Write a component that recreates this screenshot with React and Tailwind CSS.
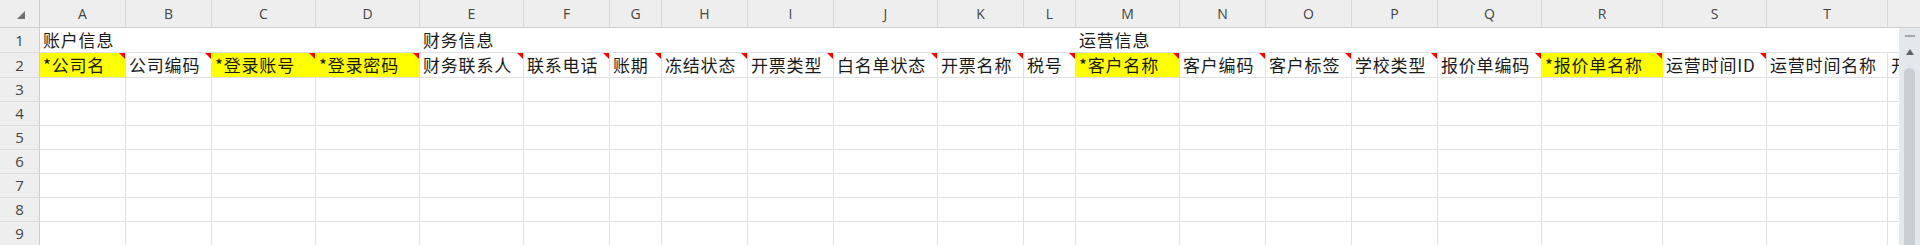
import React from "react";

const W = {
  86: "w-[86px]",
  104: "w-[104px]",
  52: "w-[52px]",
  121: "w-[121px]",
};

const cols = [
  { l: "A", w: 86, t: "*公司名", y: true, c: true },
  { l: "B", w: 86, t: "公司编码", c: true },
  { l: "C", w: 104, t: "*登录账号", y: true, c: true },
  { l: "D", w: 104, t: "*登录密码", y: true, c: true },
  { l: "E", w: 104, t: "财务联系人", c: true },
  { l: "F", w: 86, t: "联系电话", c: true },
  { l: "G", w: 52, t: "账期", c: true },
  { l: "H", w: 86, t: "冻结状态", c: true },
  { l: "I", w: 86, t: "开票类型", c: true },
  { l: "J", w: 104, t: "白名单状态", c: true },
  { l: "K", w: 86, t: "开票名称", c: true },
  { l: "L", w: 52, t: "税号", c: true },
  { l: "M", w: 104, t: "*客户名称", y: true, c: true },
  { l: "N", w: 86, t: "客户编码", c: true },
  { l: "O", w: 86, t: "客户标签", c: true },
  { l: "P", w: 86, t: "学校类型", c: true },
  { l: "Q", w: 104, t: "报价单编码", c: true },
  { l: "R", w: 121, t: "*报价单名称", y: true, c: true },
  { l: "S", w: 104, t: "运营时间ID", c: true },
  { l: "T", w: 121, t: "运营时间名称" },
];

const groups = [
  { t: "账户信息", w: "w-[380px]" },
  { t: "财务信息", w: "w-[656px]" },
  { t: "运营信息", w: "w-[812px]" },
];

const cellFont =
  "font-['Noto_Sans_CJK_SC',sans-serif] text-[17px] tracking-[0.8px] text-[#1b1b1b]";
const hdrFont = "font-['Open_Sans',sans-serif] text-[#444]";

const RowHead = ({ n, h }) => (
  <div
    className={`${h} w-[40px] shrink-0 bg-[#eeeeee] border-r border-b border-r-[#cfcfcf] border-b-[#dcdcdc] flex items-center justify-center text-[15px] ${hdrFont}`}
  >
    {n}
  </div>
);

const Comment = () => (
  <svg className="absolute top-0 right-0" width="6" height="6" viewBox="0 0 6 6">
    <polygon points="0,0 6,0 6,6" fill="#ff0000" />
  </svg>
);

const App = () => {
  const emptyRows = [3, 4, 5, 6, 7, 8, 9];

  return (
    <div className="w-[1920px] h-[245px] overflow-hidden bg-white">
      {/* column headers */}
      <div className="flex h-[28px]">
        <div className="w-[40px] shrink-0 bg-[#eeeeee] border-r border-b border-[#cfcfcf] flex items-center justify-center">
          <svg width="8" height="8" viewBox="0 0 8 8" className="ml-[2px] mt-[2px]">
            <polygon points="8,0 8,8 0,8" fill="#707070" />
          </svg>
        </div>
        {cols.map((c) => (
          <div
            key={c.l}
            className={`${W[c.w]} shrink-0 bg-[#eeeeee] border-r border-b border-r-[#d8d8d8] border-b-[#cfcfcf] flex items-center justify-center text-[14px] ${hdrFont}`}
          >
            {c.l}
          </div>
        ))}
        <div className="flex-1 bg-[#eeeeee] border-b border-[#cfcfcf]" />
      </div>

      <div className="flex">
        {/* sheet body */}
        <div className="w-[1899px] shrink-0 overflow-hidden">
          {/* row 1 */}
          <div className="flex h-[25px]">
            <RowHead n="1" h="h-[25px]" />
            {groups.map((g) => (
              <div
                key={g.t}
                className={`${g.w} shrink-0 border-b border-[#e1e1e1] pl-[3px] flex items-center whitespace-nowrap ${cellFont}`}
              >
                {g.t}
              </div>
            ))}
            <div className="flex-1 border-b border-[#e1e1e1]" />
          </div>

          {/* row 2 */}
          <div className="flex h-[25px]">
            <RowHead n="2" h="h-[25px]" />
            {cols.map((c) => (
              <div
                key={c.l}
                className={`${W[c.w]} relative shrink-0 border-r border-b border-b-[#e1e1e1] pl-[3px] flex items-center whitespace-nowrap overflow-hidden ${cellFont} ${
                  c.y ? "bg-[#ffff00] border-r-[#ffff00]" : "border-r-[#e1e1e1]"
                }`}
              >
                {c.t}
                {c.c && <Comment />}
              </div>
            ))}
            <div
              className={`flex-1 border-b border-[#e1e1e1] pl-[3px] flex items-center whitespace-nowrap overflow-hidden ${cellFont}`}
            >
              开票
            </div>
          </div>

          {/* empty rows */}
          {emptyRows.map((n) => (
            <div key={n} className="flex h-[24px]">
              <RowHead n={n} h="h-[24px]" />
              {cols.map((c) => (
                <div
                  key={c.l}
                  className={`${W[c.w]} shrink-0 border-r border-b border-[#e1e1e1]`}
                />
              ))}
              <div className="flex-1 border-b border-[#e1e1e1]" />
            </div>
          ))}
        </div>

        {/* vertical scrollbar */}
        <div className="w-[21px] shrink-0 h-[217px] bg-[#e3e8ec] flex flex-col items-center">
          <div className="mt-[7px] w-[10px] h-[2px] bg-[#a3a9ae]" />
          <svg width="8" height="6" viewBox="0 0 8 6" className="mt-[12px]">
            <polygon points="4,0 8,6 0,6" fill="#5f6368" />
          </svg>
          <div className="mt-[13px] w-[11px] flex-1 rounded-t-[6px] bg-[#c9ced2]" />
        </div>
      </div>
    </div>
  );
};

export default App;
